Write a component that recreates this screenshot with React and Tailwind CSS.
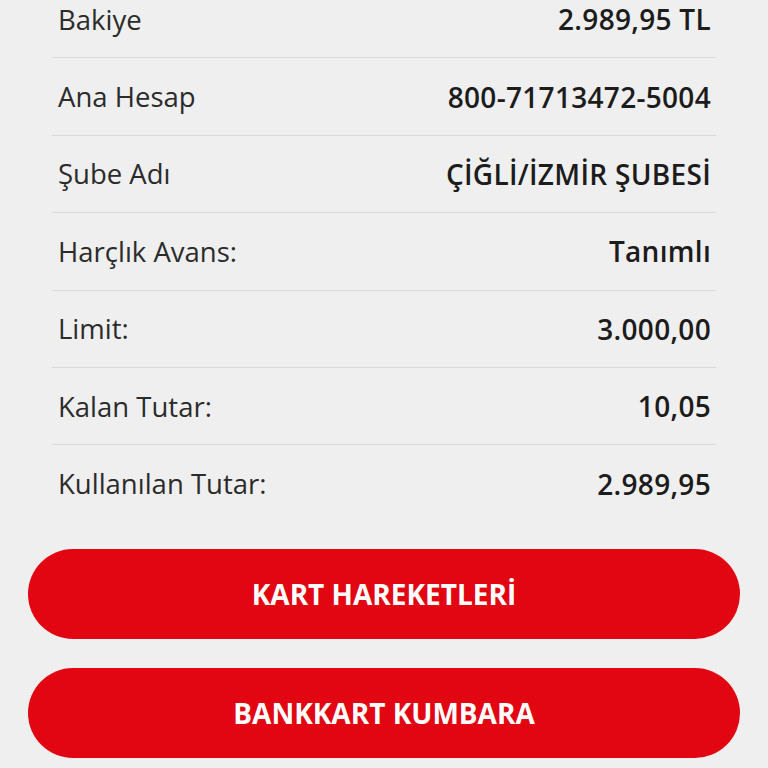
const rows = [
  { label: 'Bakiye', value: '2.989,95 TL' },
  { label: 'Ana Hesap', value: '800-71713472-5004' },
  { label: 'Şube Adı', value: 'ÇİĞLİ/İZMİR ŞUBESİ' },
  { label: 'Harçlık Avans:', value: 'Tanımlı' },
  { label: 'Limit:', value: '3.000,00' },
  { label: 'Kalan Tutar:', value: '10,05' },
  { label: 'Kullanılan Tutar:', value: '2.989,95' },
]

export default function App() {
  return (
    <div className="h-[768px] overflow-hidden bg-[#efefef] font-['Open_Sans',sans-serif]">
      {/* account details */}
      <div className="mx-[52px] -mt-[19px]">
        {rows.map((r, i) => (
          <div
            key={r.label}
            className={
              'flex h-[77.4px] items-center justify-between pl-[6px] pr-[5px] ' +
              (i < rows.length - 1 ? 'border-b border-[#d9d9d9]' : '')
            }
          >
            <span className="text-[27.5px] text-[#2b2b2b]">{r.label}</span>
            <span className="text-[28px] font-semibold tracking-[0.3px] text-[#1c1c1c]">{r.value}</span>
          </div>
        ))}
      </div>

      {/* actions */}
      <div className="mt-[26px] flex flex-col gap-[29px] px-[28px]">
        <button className="h-[90px] w-full rounded-full bg-[#e20613] text-[28px] font-bold text-white">
          KART HAREKETLERİ
        </button>
        <button className="h-[90px] w-full rounded-full bg-[#e20613] text-[28px] font-bold text-white">
          BANKKART KUMBARA
        </button>
      </div>
    </div>
  )
}
